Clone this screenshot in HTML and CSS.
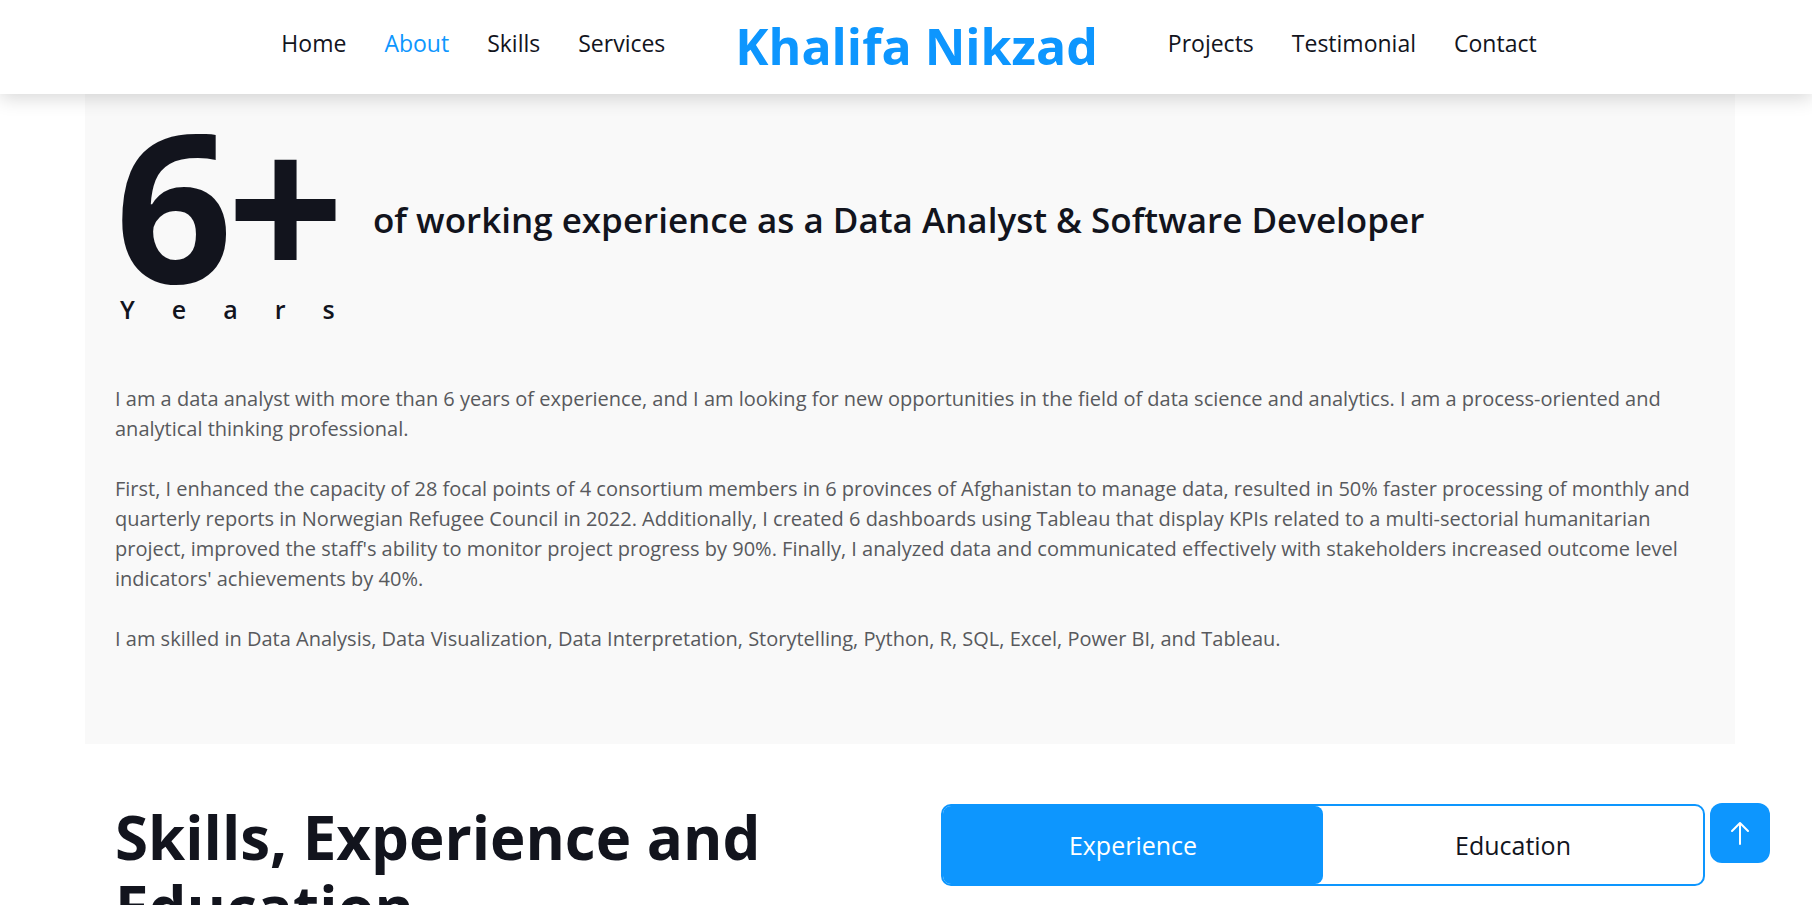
FILE: index.html
```html
<!DOCTYPE html>
<html lang="en">
<head>
<meta charset="utf-8">
<title>Khalifa Nikzad</title>
<link rel="stylesheet" href="styles.css">
</head>
<body>
<header class="site-header">
  <nav class="nav">
    <a class="nav-link" href="#">Home</a>
    <a class="nav-link active" href="#">About</a>
    <a class="nav-link" href="#">Skills</a>
    <a class="nav-link" href="#">Services</a>
    <a class="logo" href="#">Khalifa Nikzad</a>
    <a class="nav-link" href="#">Projects</a>
    <a class="nav-link" href="#">Testimonial</a>
    <a class="nav-link" href="#">Contact</a>
  </nav>
</header>
<main class="page">
  <section class="about">
    <div class="about-head">
      <div class="years">
        <div class="years-num">6+</div>
        <div class="years-label">Years</div>
      </div>
      <h2 class="about-title">of working experience as a Data Analyst &amp; Software Developer</h2>
    </div>
    <div class="about-text">
      <p>I am a data analyst with more than 6 years of experience, and I am looking for new opportunities in the field of data science and analytics. I am a process-oriented and analytical thinking professional.</p>
      <p>First, I enhanced the capacity of 28 focal points of 4 consortium members in 6 provinces of Afghanistan to manage data, resulted in 50% faster processing of monthly and quarterly reports in Norwegian Refugee Council in 2022. Additionally, I created 6 dashboards using Tableau that display KPIs related to a multi-sectorial humanitarian project, improved the staff's ability to monitor project progress by 90%. Finally, I analyzed data and communicated effectively with stakeholders increased outcome level indicators' achievements by 40%.</p>
      <p>I am skilled in Data Analysis, Data Visualization, Data Interpretation, Storytelling, Python, R, SQL, Excel, Power BI, and Tableau.</p>
    </div>
  </section>
  <section class="skills">
    <h2 class="skills-title">Skills, Experience and Education</h2>
    <div class="tabs">
      <button class="tab active">Experience</button>
      <button class="tab">Education</button>
    </div>
  </section>
</main>
<a class="to-top" href="#" aria-label="Back to top">
  <svg width="20" height="26" viewBox="0 0 20 26" fill="none" stroke="#fff" stroke-width="2" stroke-linecap="round" stroke-linejoin="round"><path d="M10 24V3M2 11l8-8 8 8"/></svg>
</a>
</body>
</html>
```
FILE: styles.css
```css
* { box-sizing: border-box; }
html, body { margin: 0; padding: 0; }
body {
  font-family: "Open Sans", "Noto Sans", sans-serif;
  color: #12141d;
  background: #fff;
  overflow: hidden;
}
a { text-decoration: none; color: inherit; }

.site-header {
  position: relative;
  z-index: 2;
  height: 94px;
  background: #fff;
  box-shadow: 0 4px 18px rgba(0,0,0,0.16);
}
.nav {
  height: 100%;
  display: flex;
  align-items: center;
  justify-content: center;
  gap: 38px;
  padding: 0 0 9px 6px;
}
.nav-link {
  font-size: 23px;
  font-weight: 500;
  color: #12141d;
}
.nav-link.active { color: #0d96fe; }
.logo {
  font-size: 50px;
  font-weight: 700;
  color: #0d96fe;
  margin: 0 32px;
  line-height: 1;
  padding-top: 6px;
}

.page {
  width: 1650px;
  margin-left: 85px;
}
.about {
  background: #f9f9f9;
  padding: 0 30px 90px;
}
.about-head {
  display: flex;
  align-items: flex-start;
  gap: 36px;
}
.years {
  display: flex;
  flex-direction: column;
  width: 222px;
}
.years-num {
  font-size: 206px;
  font-weight: 700;
  line-height: 170px;
  letter-spacing: -6px;
  margin-top: 24px;
}
.years-label {
  font-size: 25px;
  font-weight: 600;
  line-height: 34px;
  letter-spacing: 37px;
  margin-top: 4px;
  padding-left: 5px;
  white-space: nowrap;
}
.about-title {
  margin: 102px 0 0;
  font-size: 35px;
  font-weight: 600;
  line-height: normal;
}
.about-text {
  margin-top: 58px;
  font-size: 20px;
  line-height: 30px;
  color: #58595d;
}
.about-text p { margin: 0 0 30px; }
.about-text p:last-child { margin-bottom: 0; }

.skills {
  display: grid;
  grid-template-columns: 1fr 764px;
  gap: 60px;
  padding: 60px 30px 0;
  align-items: start;
}
.skills-title {
  margin: -2px 0 0;
  font-size: 60px;
  font-weight: 700;
  line-height: 70px;
}
.tabs {
  display: flex;
  border: 2px solid #0d96fe;
  border-radius: 10px;
  height: 82px;
}
.tab {
  flex: 1;
  border: 0;
  background: transparent;
  font-family: inherit;
  font-size: 25px;
  color: #12141d;
  border-radius: 8px;
}
.tab.active {
  background: #0d96fe;
  color: #fff;
}

.to-top {
  position: fixed;
  right: 42px;
  bottom: 42px;
  width: 60px;
  height: 60px;
  background: #0d96fe;
  border-radius: 12px;
  display: flex;
  align-items: center;
  justify-content: center;
}
```
